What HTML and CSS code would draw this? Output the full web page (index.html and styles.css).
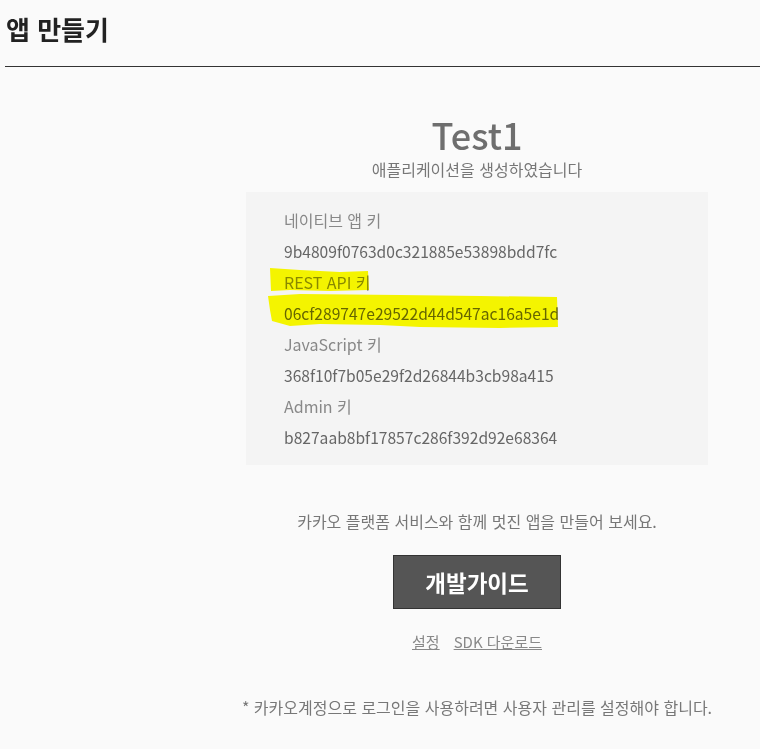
FILE: index.html
```html
<!DOCTYPE html>
<html lang="ko">
<head>
    <meta charset="UTF-8">
    <title>앱 만들기</title>
    <link rel="stylesheet" href="styles.css">
</head>
<body>
    <div class="header">
        <h1>앱 만들기</h1>
    </div>
    <div class="content">
        <h2 class="app-name">Test1</h2>
        <p class="created">애플리케이션을 생성하였습니다</p>
        <div class="keys">
            <p class="key-label">네이티브 앱 키</p>
            <p class="key-value">9b4809f0763d0c321885e53898bdd7fc</p>
            <p class="key-label">REST API 키</p>
            <p class="key-value">06cf289747e29522d44d547ac16a5e1d</p>
            <p class="key-label">JavaScript 키</p>
            <p class="key-value">368f10f7b05e29f2d26844b3cb98a415</p>
            <p class="key-label">Admin 키</p>
            <p class="key-value">b827aab8bf17857c286f392d92e68364</p>
            <svg class="marker" viewBox="0 0 462 273" width="462" height="273">
                <polygon points="24,76 54,78 94,80 122,79 123,98 84,99 44,98 25,99"/>
                <polygon points="22,104 54,102 154,103 234,104 311,105 312,135 254,136 174,135 134,133 74,132 44,134 26,129 24,118"/>
            </svg>
        </div>
        <p class="intro">카카오 플랫폼 서비스와 함께 멋진 앱을 만들어 보세요.</p>
        <a class="guide-btn" href="#">개발가이드</a>
        <div class="links">
            <a href="#">설정</a>
            <a href="#">SDK 다운로드</a>
        </div>
        <p class="notice">* 카카오계정으로 로그인을 사용하려면 사용자 관리를 설정해야 합니다.</p>
    </div>
</body>
</html>
```

FILE: styles.css
```css
body {
    margin: 0;
    background-color: #fafafa;
    font-family: "Noto Sans CJK KR", "Noto Sans", sans-serif;
    color: #777;
}
.header {
    margin-left: 5px;
    border-bottom: 1px solid #333;
    height: 66px;
}
.header h1 {
    margin: 0;
    padding: 12px 0 0 1px;
    font-size: 26px;
    line-height: 34px;
    font-weight: bold;
    color: #222;
}
.content {
    width: 462px;
    margin-left: 246px;
    text-align: center;
}
.app-name {
    margin: 0;
    padding-top: 44px;
    font-size: 36px;
    line-height: 46px;
    font-weight: 500;
    color: #6e6e6e;
}
.created {
    margin: 0;
    font-size: 16px;
    line-height: 24px;
    color: #777;
}
.keys {
    position: relative;
    margin-top: 11px;
    padding: 13px 38px 12px;
    background-color: #f4f4f4;
    text-align: left;
}
.keys p {
    margin: 0;
    line-height: 31px;
}
.key-label {
    font-size: 16px;
    color: #888;
}
.key-value {
    font-size: 15.6px;
    color: #666;
}
.marker {
    position: absolute;
    left: 0;
    top: 0;
    mix-blend-mode: multiply;
}
.marker polygon {
    fill: #ffff00;
}
.intro {
    margin: 44px 0 0;
    font-size: 16px;
    line-height: 24px;
    color: #777;
}
.guide-btn {
    display: inline-block;
    margin-top: 22px;
    width: 166px;
    height: 52px;
    line-height: 52px;
    background-color: #555;
    border: 1px solid #333;
    color: #fff;
    font-size: 22.5px;
    font-weight: bold;
    text-decoration: none;
}
.links {
    margin-top: 21px;
    display: flex;
    justify-content: center;
    gap: 14px;
    font-size: 15px;
    line-height: 24px;
}
.links a {
    color: #888;
}
.notice {
    margin: 41px -10px 0;
    font-size: 16px;
    line-height: 24px;
    color: #777;
}
```
